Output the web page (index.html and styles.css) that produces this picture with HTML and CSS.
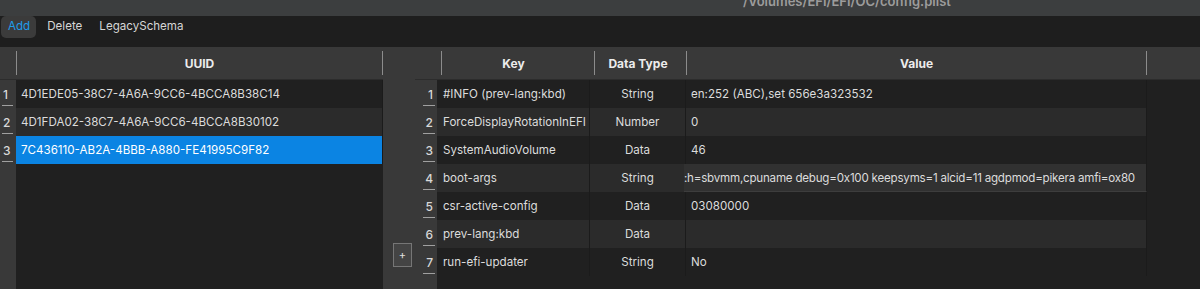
FILE: index.html
```html
<!DOCTYPE html>
<html lang="en">
<head>
    <meta charset="UTF-8">
    <meta name="viewport" content="width=device-width, initial-scale=1.0">
    <title>config.plist - NVRAM</title>
    <link rel="stylesheet" href="styles.css">
</head>
<body>
    <div class="titlebar">
        <span class="title">/Volumes/EFI/EFI/OC/config.plist</span>
    </div>

    <div class="toolbar">
        <span class="tab active">Add</span>
        <span class="tab">Delete</span>
        <span class="tab">LegacySchema</span>
    </div>

    <div class="main">
        <!-- UUID list -->
        <div class="grid uuid-table">
            <div class="head num"></div>
            <div class="head sep-both">UUID</div>

            <div class="num">1</div>
            <div class="cell">4D1EDE05-38C7-4A6A-9CC6-4BCCA8B38C14</div>
            <div class="num">2</div>
            <div class="cell alt">4D1FDA02-38C7-4A6A-9CC6-4BCCA8B30102</div>
            <div class="num">3</div>
            <div class="cell selected">7C436110-AB2A-4BBB-A880-FE41995C9F82</div>

            <div class="fill-num"></div>
            <div class="fill"></div>
        </div>

        <!-- add button column -->
        <div class="side">
            <button class="add-btn">+</button>
        </div>

        <!-- key / value table -->
        <div class="grid kv-table">
            <div class="head num"></div>
            <div class="head sep">Key</div>
            <div class="head sep">Data Type</div>
            <div class="head sep-both">Value</div>

            <div class="num r">1</div>
            <div class="cell key">#INFO (prev-lang:kbd)</div>
            <div class="cell center">String</div>
            <div class="cell">en:252 (ABC),set 656e3a323532</div>

            <div class="num r">2</div>
            <div class="cell key alt">ForceDisplayRotationInEFI</div>
            <div class="cell alt center">Number</div>
            <div class="cell alt">0</div>

            <div class="num r">3</div>
            <div class="cell key">SystemAudioVolume</div>
            <div class="cell center">Data</div>
            <div class="cell">46</div>

            <div class="num r">4</div>
            <div class="cell key alt">boot-args</div>
            <div class="cell alt center">String</div>
            <div class="cell editing">:h=sbvmm,cpuname debug=0x100 keepsyms=1 alcid=11 agdpmod=pikera amfi=ox80</div>

            <div class="num r">5</div>
            <div class="cell key">csr-active-config</div>
            <div class="cell center">Data</div>
            <div class="cell">03080000</div>

            <div class="num r">6</div>
            <div class="cell key alt">prev-lang:kbd</div>
            <div class="cell alt center">Data</div>
            <div class="cell alt"></div>

            <div class="num r">7</div>
            <div class="cell key">run-efi-updater</div>
            <div class="cell center">String</div>
            <div class="cell">No</div>

            <div class="fill-num"></div>
            <div class="fill"></div>
            <div class="fill"></div>
            <div class="fill"></div>
        </div>

        <div class="rest">
            <div class="rest-head"></div>
        </div>
    </div>
</body>
</html>
```

FILE: styles.css
```css
body {
    margin: 0;
    padding: 0;
    width: 1200px;
    height: 289px;
    overflow: hidden;
    background-color: #202020;
    font-family: Inter, "Noto Sans", sans-serif;
    font-size: 11.6px;
    color: #dcdcdc;
}

.titlebar {
    height: 16px;
    background-color: #3c3e3f;
    overflow: hidden;
    padding-left: 743px;
}

.title {
    display: block;
    margin-top: -7px;
    font-size: 13px;
    line-height: 16px;
    font-weight: 600;
    color: #9c9c9c;
}

.toolbar {
    height: 31px;
    background-color: #1e1e1e;
    display: flex;
    align-items: flex-start;
    padding-left: 1px;
}

.tab {
    height: 22px;
    line-height: 20px;
    padding: 0 9px 0 8px;
    font-size: 11.6px;
    color: #d6d6d6;
    border-radius: 5px;
}

.tab.active {
    background-color: #3b3b3b;
    color: #1e9bea;
    padding: 0 6px 0 7px;
    margin-right: 3px;
}

.main {
    display: flex;
    height: 242px;
    background-color: #393939;
}

.grid {
    display: grid;
    height: 100%;
}

.uuid-table {
    grid-template-columns: 16px 367px;
    grid-template-rows: 33px repeat(3, 28px) 1fr;
}

.kv-table {
    grid-template-columns: 22px 153px 96px 461px;
    grid-template-rows: 33px repeat(7, 28px) 1fr;
}

.head {
    background-color: #393939;
    border-bottom: 1px solid #2c2c2c;
    font-size: 12px;
    font-weight: 700;
    color: #ececec;
    display: flex;
    align-items: center;
    justify-content: center;
}

.head.sep {
    background: #393939 linear-gradient(#8c8c8c, #8c8c8c) left 4px top 4px / 1px calc(100% - 8px) no-repeat;
}

.head.sep-both {
    background:
        linear-gradient(#8c8c8c, #8c8c8c) left 4px / 1px calc(100% - 8px) no-repeat,
        linear-gradient(#8c8c8c, #8c8c8c) right 0 top 4px / 1px calc(100% - 8px) no-repeat,
        #393939;
}

.num {
    color: #d8d8d8;
    font-size: 12px;
    font-weight: 500;
    display: flex;
    align-items: center;
    padding-left: 3px;
    background: linear-gradient(#a0a0a0, #a0a0a0) left 2px bottom 2px / 11px 1px no-repeat;
}

.num.r {
    justify-content: flex-end;
    padding: 0 4px 0 0;
    background-position: right 2px bottom 2px;
    background-size: 12px 1px;
}

.head.num {
    background: #393939;
}

.cell {
    background-color: #202020;
    display: flex;
    align-items: center;
    padding-left: 5px;
    white-space: nowrap;
    overflow: hidden;
    border-right: 1px solid #1b1b1b;
}

.cell.key {
    padding-left: 6px;
}

.cell.alt {
    background-color: #2b2b2b;
}

.cell.center {
    justify-content: center;
    padding-left: 0;
}

.cell.selected {
    background-color: #0b84e3;
    color: #ffffff;
}

.cell.editing {
    background-color: #313131;
    border-bottom: 1px solid #3d3d3d;
    padding-left: 0;
    margin-left: -2px;
    letter-spacing: -0.22px;
}

.fill {
    background-color: #202020;
}

.side {
    width: 32px;
    padding-top: 196px;
    box-sizing: border-box;
}

.add-btn {
    display: block;
    margin-left: 10px;
    width: 19px;
    height: 24px;
    padding: 0;
    background-color: #444444;
    border: 1px solid #767676;
    color: #e0e0e0;
    font-family: Inter, sans-serif;
    font-size: 11px;
    line-height: 20px;
}

.rest {
    flex: 1;
    display: flex;
    flex-direction: column;
    background-color: #202020;
}

.rest-head {
    height: 33px;
    background-color: #393939;
    border-bottom: 1px solid #2c2c2c;
    box-sizing: border-box;
}
```
